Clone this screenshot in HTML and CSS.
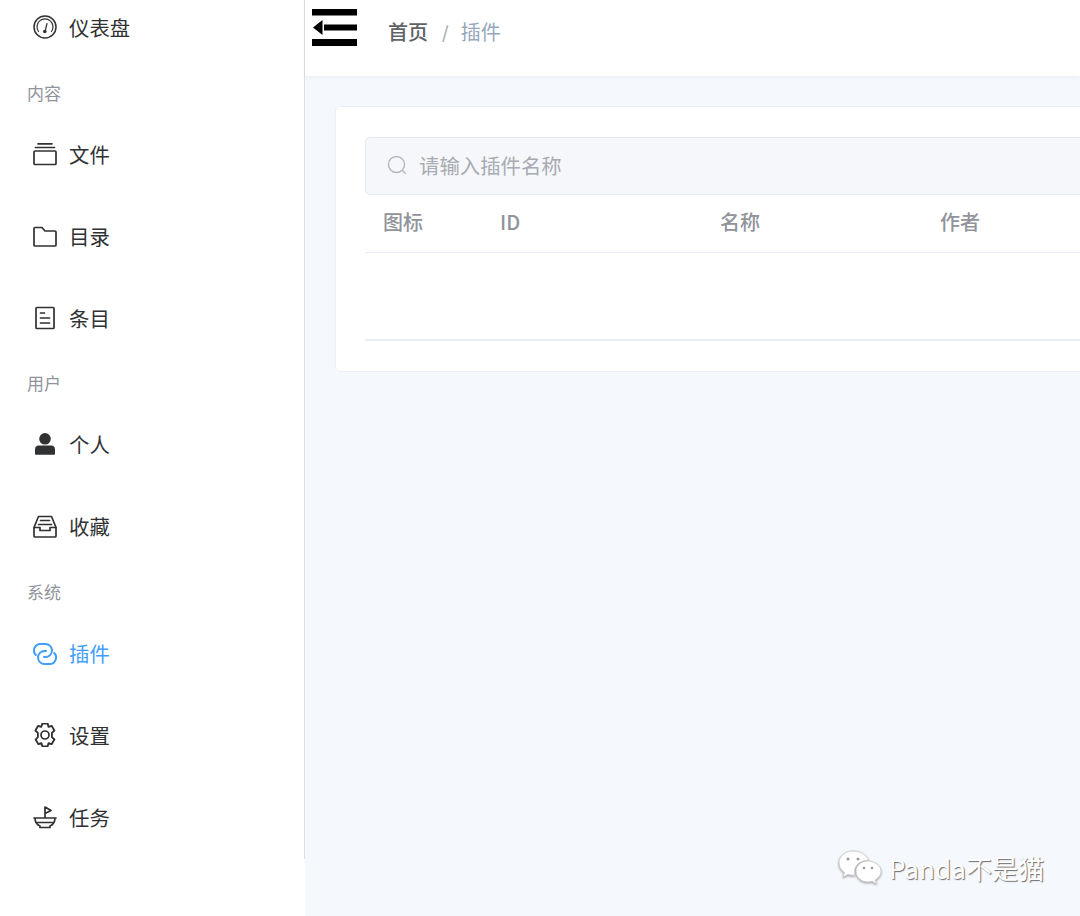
FILE: index.html
```html
<!DOCTYPE html>
<html lang="zh-CN">
<head>
<meta charset="utf-8">
<title>插件</title>
<link rel="stylesheet" href="styles.css">
</head>
<body>
<div class="app">
  <aside class="sidebar">
    <nav class="menu">
      <a class="item"><svg class="icon" viewBox="0 0 24 24"><circle class="outer" cx="12" cy="12" r="11"/><path class="inner" d="M5.500 16.500a8 8 0 1 1 13 0"/><path class="inner" d="M14 8.500l-1.800 7.500"/><circle class="fill" cx="11.800" cy="16.500" r="1.800"/></svg><span>仪表盘</span></a>
      <div class="label">内容</div>
      <a class="item"><svg class="icon" viewBox="0 0 24 24"><rect x="1" y="9" width="22" height="13.500" rx="1"/><path d="M2.500 5.500h19M5 1.800h14"/></svg><span>文件</span></a>
      <a class="item"><svg class="icon" viewBox="0 0 24 24"><path d="M1 4.500a1 1 0 0 1 1-1h7l3 3.500h10a1 1 0 0 1 1 1v13a1 1 0 0 1-1 1H2a1 1 0 0 1-1-1z"/></svg><span>目录</span></a>
      <a class="item"><svg class="icon" viewBox="0 0 24 24"><rect x="3" y="1.500" width="18" height="21" rx=".8"/><path d="M7.500 7h4M7.500 12h9M7.500 17h9"/></svg><span>条目</span></a>
      <div class="label">用户</div>
      <a class="item"><svg class="icon" viewBox="0 0 24 24"><circle class="fill" cx="12" cy="6.800" r="5.800"/><path class="fill" d="M2 22v-4.500a4 4 0 0 1 4-4h12a4 4 0 0 1 4 4V22a.8.800 0 0 1-.8.800H2.800A.8.800 0 0 1 2 22z"/></svg><span>个人</span></a>
      <a class="item"><svg class="icon" viewBox="0 0 24 24"><path d="M1 13.500L5.500 2.500h13L23 13.500V22a1 1 0 0 1-1 1H2a1 1 0 0 1-1-1z"/><path d="M1 13.500h6v3h10v-3h6M7.500 6.500h9M5.500 10.500h13"/></svg><span>收藏</span></a>
      <div class="label">系统</div>
      <a class="item active"><svg class="icon link" viewBox="0 0 24 24"><path d="M2.800 14A6.500 6.500 0 0 1 7.500 3h5a6.500 6.500 0 0 1 0 13H11"/><path d="M21.200 12A6.500 6.500 0 0 1 16.500 23h-5a6.500 6.500 0 0 1 0-13H13"/></svg><span>插件</span></a>
      <a class="item"><svg class="icon" viewBox="0 0 24 24"><path d="M9.500 1.500h5l.8 3 2.800-1 2.600 4.300-2.300 2.200v4l2.300 2.200-2.600 4.300-2.800-1-.8 3h-5l-.8-3-2.800 1-2.600-4.300L5.400 14v-4L3.100 7.800l2.600-4.300 2.800 1z" transform="translate(12 12) scale(1.08) translate(-12 -12)"/><circle cx="12" cy="12" r="4"/></svg><span>设置</span></a>
      <a class="item"><svg class="icon" viewBox="0 0 24 24"><path d="M1 13h22M2 13c0 5 2.500 7 5 8v1.500h10V21c2.500-1 5-3 5-8M4.500 17.500h15M12 13V2l6 3.500-6 3"/></svg><span>任务</span></a>
    </nav>
  </aside>
  <div class="main">
    <header class="topbar">
      <svg class="hamburger" viewBox="0 0 45 37"><path d="M0 0h45v6.500H0zM0 30h45v7H0zM12 15.500h33v6H12zM1 18.500L10.500 11v15z"/></svg>
      <div class="crumbs"><b>首页</b><i>/</i><span>插件</span></div>
    </header>
    <section class="card">
      <div class="search"><svg class="search-icon" viewBox="0 0 20 20"><circle cx="9.500" cy="9.500" r="8"/><path d="M15.500 15.500l3 3"/></svg><span>请输入插件名称</span></div>
      <div class="thead"><div>图标</div><div>ID</div><div>名称</div><div>作者</div></div>
      <div class="tbody"></div>
    </section>
  </div>
</div>
<div class="watermark">
  <svg class="wechat" viewBox="0 0 44 36"><path class="bubble" d="M15 1C7.500 1 1 6 1 13c0 4 2 7 5.500 9.500L5 27l5-2.500c2 .6 3 .8 5 .8 1 0 2 0 2-.3-.5-1.500-.5-2-.5-3.500 0-6.500 6-11 13-11h1C28.500 4.500 22 1 15 1z"/><path class="bubble" d="M30 11c-6.500 0-12 4.500-12 10.500S23.500 32 30 32c1.500 0 2.500-.2 4-.7l4.500 2.700-1.200-4c3.500-2.500 5.700-5 5.700-8.500C43 15.500 36.500 11 30 11z"/><circle class="eye" cx="10" cy="9" r="1.500"/><circle class="eye" cx="20" cy="9" r="1.500"/><circle class="eye" cx="26" cy="18" r="1.300"/><circle class="eye" cx="34" cy="18" r="1.300"/></svg>
  <span>Panda不是猫</span>
</div>
</body>
</html>
```
FILE: styles.css
```css
* { box-sizing: border-box; }
html, body { margin: 0; height: 916px; overflow: hidden; }
body { position: relative; background: #f5f8fd; font-family: "Noto Sans CJK SC", "Noto Sans", sans-serif; }
.app { display: flex; height: 916px; overflow: hidden; }
.sidebar { width: 305px; flex: none; background: #fff; }
.menu { margin-top: -14px; padding-bottom: 1px; border-right: 1px solid #dcdfe6; }
.item { display: flex; align-items: center; height: 82px; padding-left: 32.500px; color: #303133; font-size: 20.400px; gap: 12.500px; }
.item.active { color: #409eff; }
.label { height: 44.5px; padding: 12.5px 0 0 27px; font-size: 17px; line-height: 24px; color: #909399; }
.icon { width: 24px; height: 24px; flex: none; fill: none; stroke: currentColor; stroke-width: 1.700; stroke-linejoin: round; stroke-linecap: round; }
.icon .fill { fill: currentColor; stroke: none; }
.icon .outer { stroke-width: 1.500; }
.icon .inner { stroke-width: 1.200; }
.icon.link { stroke-width: 2; }
.main { flex: 1; min-width: 0; }
.topbar { position: relative; display: flex; align-items: flex-start; height: 76px; padding: 9px 0 0 7px; background: #fff; box-shadow: 0 1px 4px rgba(0, 21, 41, .05); }
.hamburger { width: 45px; height: 37px; flex: none; }
.crumbs { display: flex; align-items: center; margin: 7px 0 0 31px; height: 30px; font-size: 20px; color: #97a8be; }
.crumbs b { color: #606266; font-weight: 500; }
.crumbs i { margin: 0 12px 0 14px; font-style: normal; font-weight: 500; color: #a3a8b0; font-size: 17px; }
.card { width: 1000px; height: 266px; margin: 30px 0 0 30px; padding: 30px 29px; background: #fff; border: 1px solid #ebeef5; border-radius: 5px; }
.search { display: flex; align-items: center; height: 58px; padding: 0 0 2px 21px; background: #f5f7fa; border: 1px solid #e4e7ed; border-radius: 5px; color: #a8abb2; font-size: 20.400px; }
.search-icon { width: 20px; height: 20px; margin-right: 12px; fill: none; stroke: #b4b7bd; stroke-width: 1.400; stroke-linecap: round; }
.thead { display: grid; grid-template-columns: 117px 220px 220px 220px; height: 58px; align-items: center; padding-bottom: 5px; border-bottom: 1px solid #ebeef5; color: #909399; font-size: 20px; font-weight: 500; }
.thead div { padding-left: 18px; }
.tbody { height: 88px; border-bottom: 2px solid #ebeef5; }
.watermark { position: absolute; left: 838px; top: 850px; display: flex; align-items: center; gap: 7px; color: #fff; font-size: 26px; line-height: 36px; letter-spacing: .1px; text-shadow: 1px 1px 1px #6f6f6f; }
.wechat { width: 44px; height: 36px; flex: none; filter: drop-shadow(0 1px 1px #9a9a9a); }
.bubble { fill: #fff; stroke: #c9c9c9; stroke-width: .8; }
.eye { fill: #999; }
```
